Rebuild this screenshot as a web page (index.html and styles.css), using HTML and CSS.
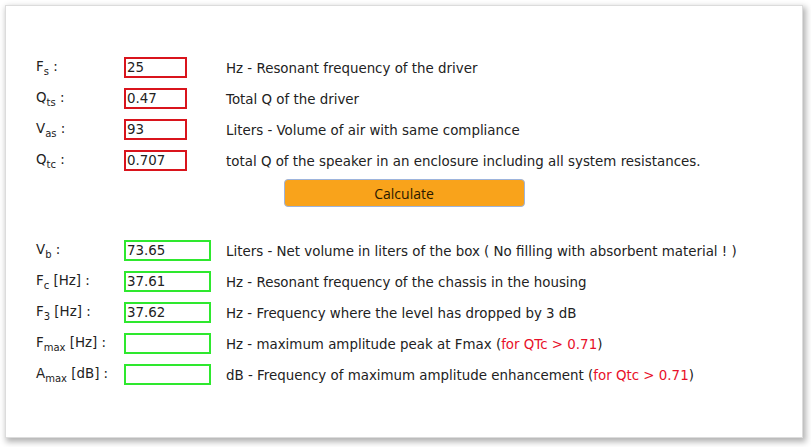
FILE: index.html
```html
<html>

<head>
    <title>Closed Box Calculator</title>
    <link rel="stylesheet" href="styles.css">
</head>

<body>
    <div id="card">
        <div class="rows">
            <div class="row">
                <span class="label">F<sub>s</sub> :</span>
                <span><input type="text" class="in" value="25"></span>
                <span class="desc">Hz - Resonant frequency of the driver</span>
            </div>
            <div class="row">
                <span class="label">Q<sub>ts</sub> :</span>
                <span><input type="text" class="in" value="0.47"></span>
                <span class="desc">Total Q of the driver</span>
            </div>
            <div class="row">
                <span class="label">V<sub>as</sub> :</span>
                <span><input type="text" class="in" value="93"></span>
                <span class="desc">Liters - Volume of air with same compliance</span>
            </div>
            <div class="row">
                <span class="label">Q<sub>tc</sub> :</span>
                <span><input type="text" class="in" value="0.707"></span>
                <span class="desc">total Q of the speaker in an enclosure including all system resistances.</span>
            </div>
        </div>

        <div class="center">
            <button id="calc">Calculate</button>
        </div>

        <div class="rows">
            <div class="row">
                <span class="label">V<sub>b</sub> :</span>
                <span><input type="text" class="out" value="73.65"></span>
                <span class="desc">Liters - Net volume in liters of the box ( No filling with absorbent material ! )</span>
            </div>
            <div class="row">
                <span class="label">F<sub>c</sub> [Hz] :</span>
                <span><input type="text" class="out" value="37.61"></span>
                <span class="desc">Hz - Resonant frequency of the chassis in the housing</span>
            </div>
            <div class="row">
                <span class="label">F<sub>3</sub> [Hz] :</span>
                <span><input type="text" class="out" value="37.62"></span>
                <span class="desc">Hz - Frequency where the level has dropped by 3 dB</span>
            </div>
            <div class="row">
                <span class="label">F<sub>max</sub> [Hz] :</span>
                <span><input type="text" class="out" value=""></span>
                <span class="desc">Hz - maximum amplitude peak at Fmax (<span class="warn">for QTc &gt; 0.71</span>)</span>
            </div>
            <div class="row">
                <span class="label">A<sub>max</sub> [dB] :</span>
                <span><input type="text" class="out" value=""></span>
                <span class="desc">dB - Frequency of maximum amplitude enhancement (<span class="warn">for Qtc &gt; 0.71</span>)</span>
            </div>
        </div>
    </div>
</body>

</html>
```

FILE: styles.css
```css
body {
    margin: 0px;
    padding: 5px 8px 9px 5px;
    background-color: white;
    font-family: 'DejaVu Sans', Verdana, sans-serif;
    font-size: 13.4px;
    color: #222;
}

#card {
    height: 433px;
    box-sizing: border-box;
    border: 1px solid #dcdcdc;
    background-color: white;
    box-shadow: 2px 3px 6px 1px rgba(0, 0, 0, 0.3);
    padding-top: 46px;
    padding-left: 30px;
}

.row {
    display: grid;
    grid-template-columns: 88px 102px auto;
    align-items: center;
    height: 31px;
}

.label,
.desc {
    padding-top: 1px;
}

.label sub {
    font-size: 10px;
    vertical-align: -4px;
}

.in,
.out {
    box-sizing: border-box;
    height: 21px;
    margin: 0px;
    padding: 0px 0px 0px 1px;
    font-family: 'DejaVu Sans', Verdana, sans-serif;
    font-size: 13.4px;
    color: #222;
    background-color: white;
    outline: none;
}

.in {
    width: 63px;
    border: 2px solid #d9141c;
}

.out {
    width: 87px;
    border: 2px solid #2ee82e;
}

.warn {
    color: #e8102a;
}

.center {
    text-align: center;
    padding: 3px 0px 28px 0px;
    margin-left: -30px;
}

#calc {
    width: 241px;
    height: 28px;
    margin: 0px;
    border: 1px solid #9db4dc;
    border-radius: 4px;
    background-color: #f9a31b;
    color: #2a1a00;
    font-family: 'Open Sans', sans-serif;
    font-size: 14px;
    cursor: pointer;
}
```
